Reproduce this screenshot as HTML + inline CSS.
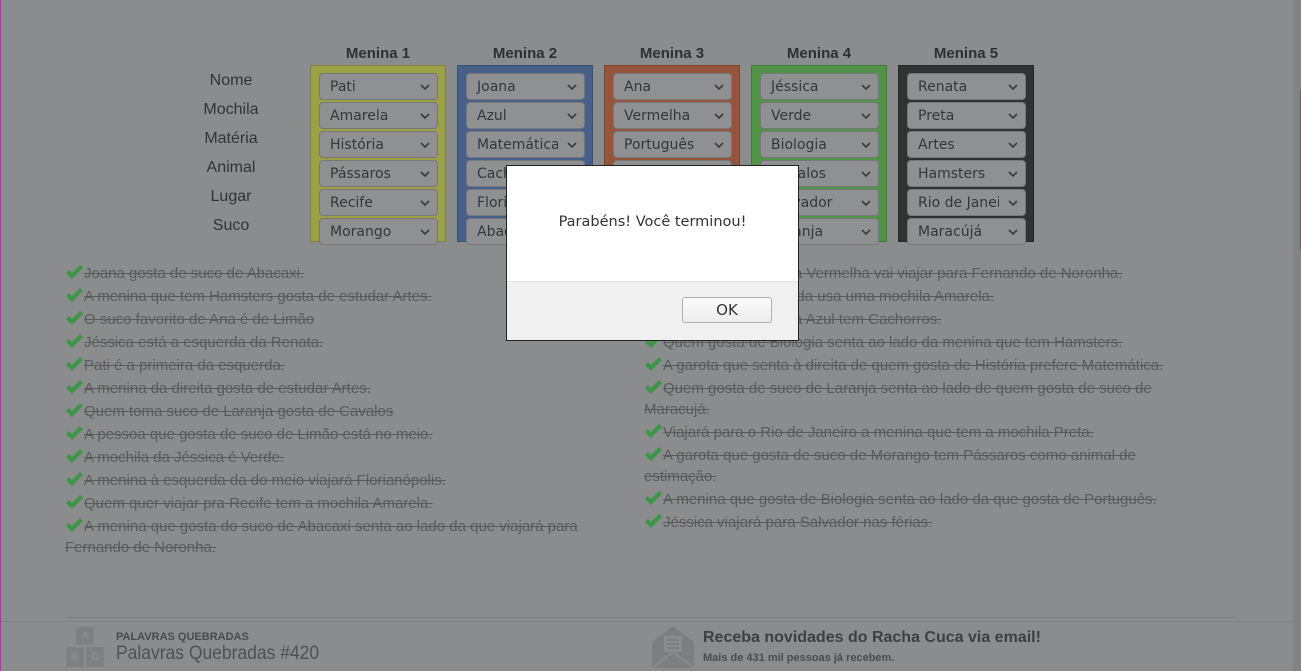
<!DOCTYPE html>
<html><head><meta charset="utf-8"><style>
*{margin:0;padding:0;box-sizing:border-box}
body{width:1301px;height:671px;overflow:hidden;background:#8b8c8e;font-family:"Liberation Sans",Arial,sans-serif;position:relative;border-left:1px solid #a0409a}
.rstrip{position:absolute;left:1292px;top:0;width:9px;height:671px;background:#828385}
.oline{position:absolute;left:1299px;top:90px;width:2px;height:160px;background:#8a5a40}
.lbl{position:absolute;width:100px;left:180px;text-align:center;font-size:16px;color:#333}
.col{position:absolute;top:65px;width:136px;height:177px}
.title{position:absolute;top:45px;width:136px;text-align:center;font-weight:bold;font-size:15px;color:#2f2f2f}
.sel{position:absolute;left:8px;width:119px;height:27px;background:#8f9091;border:1px solid #767778;border-radius:4px;font-family:"DejaVu Sans",sans-serif;font-size:14px;color:#363636;padding:5px 0 0 10px;white-space:nowrap;overflow:hidden}
.sel svg{position:absolute;right:7px;top:10px}
.clues{position:absolute;top:263px;width:552px;font-size:15px;color:#595a5b;list-style:none}
.clues li{line-height:21px;margin-bottom:2px;text-decoration:line-through}
.ck{display:inline-block;width:18px;height:14px;vertical-align:-1px;margin-right:1px}
.dlg{position:absolute;left:505px;top:165px;width:293px;height:176px;background:#fff;border:1px solid #222}
.dlg .msg{position:absolute;top:48px;width:100%;text-align:center;font-family:"DejaVu Sans",sans-serif;font-size:14.5px;color:#333}
.dlg .ft{position:absolute;left:0;top:115px;width:100%;height:59px;background:#f0f0f0;border-top:1px solid #e2e2e2}
.ok{position:absolute;left:175px;top:15px;width:90px;height:26px;border:1px solid #b0b0b0;border-radius:3px;background:linear-gradient(#fbfbfb,#ececec);font-family:"DejaVu Sans",sans-serif;font-size:15px;text-align:center;line-height:24px;color:#333}
</style></head><body>
<div class="rstrip"></div><div class="oline"></div>
<div class="lbl" style="top:72px">Nome</div>
<div class="lbl" style="top:101px">Mochila</div>
<div class="lbl" style="top:130px">Matéria</div>
<div class="lbl" style="top:159px">Animal</div>
<div class="lbl" style="top:188px">Lugar</div>
<div class="lbl" style="top:217px">Suco</div>

<div class="title" style="left:309px">Menina 1</div>
<div class="title" style="left:456px">Menina 2</div>
<div class="title" style="left:603px">Menina 3</div>
<div class="title" style="left:750px">Menina 4</div>
<div class="title" style="left:897px">Menina 5</div>

<div class="col" style="left:309px;background:#9ca145;border:1px solid #7d8040"></div>
<div class="col" style="left:456px;background:#47608a;border:1px solid #3a4e6e"></div>
<div class="col" style="left:603px;background:#94553a;border:1px solid #7a4530"></div>
<div class="col" style="left:750px;background:#529447;border:1px solid #427838"></div>
<div class="col" style="left:897px;background:#313234;border:1px solid #262626"></div>

<div id="sels"></div>

<ul class="clues" style="left:64px" id="l1">
<li>Joana gosta de suco de Abacaxi.</li>
<li>A menina que tem Hamsters gosta de estudar Artes.</li>
<li>O suco favorito de Ana é de Limão</li>
<li>Jéssica está a esquerda da Renata.</li>
<li>Pati é a primeira da esquerda.</li>
<li>A menina da direita gosta de estudar Artes.</li>
<li>Quem toma suco de Laranja gosta de Cavalos</li>
<li>A pessoa que gosta de suco de Limão está no meio.</li>
<li>A mochila da Jéssica é Verde.</li>
<li>A menina à esquerda da do meio viajará Florianópolis.</li>
<li>Quem quer viajar pra Recife tem a mochila Amarela.</li>
<li>A menina que gosta do suco de Abacaxi senta ao lado da que viajará para Fernando de Noronha.</li>
</ul>
<ul class="clues" style="left:643px" id="l2">
<li>A menina da mochila Vermelha vai viajar para Fernando de Noronha.</li>
<li>A menina da esquerda usa uma mochila Amarela.</li>
<li>A menina da mochila Azul tem Cachorros.</li>
<li>Quem gosta de Biologia senta ao lado da menina que tem Hamsters.</li>
<li>A garota que senta à direita de quem gosta de História prefere Matemática.</li>
<li>Quem gosta de suco de Laranja senta ao lado de quem gosta de suco de Maracujá.</li>
<li>Viajará para o Rio de Janeiro a menina que tem a mochila Preta.</li>
<li>A garota que gosta de suco de Morango tem Pássaros como animal de estimação.</li>
<li>A menina que gosta de Biologia senta ao lado da que gosta de Português.</li>
<li>Jéssica viajará para Salvador nas férias.</li>
</ul>

<div style="position:absolute;left:65px;top:617px;width:1170px;height:1px;background:#7c7d7f"></div>
<div style="position:absolute;left:0;top:621px;width:1292px;height:1px;background:#7e7f81"></div>
<div style="position:absolute;left:65px;top:627px;width:38px;height:40px">
<div style="position:absolute;left:10px;top:0;width:18px;height:18px;background:#7f8082;color:#8c8d8f;font-size:11px;font-weight:bold;text-align:center;line-height:18px">A</div>
<div style="position:absolute;left:0;top:20px;width:18px;height:20px;background:#7f8082;color:#8c8d8f;font-size:11px;font-weight:bold;text-align:center;line-height:20px">B</div>
<div style="position:absolute;left:20px;top:20px;width:18px;height:20px;background:#7f8082;color:#8c8d8f;font-size:11px;font-weight:bold;text-align:center;line-height:20px">C</div>
</div>
<div style="position:absolute;left:115px;top:631px;font-size:11px;font-weight:bold;color:#4a4a4a">PALAVRAS QUEBRADAS</div>
<div style="position:absolute;left:115px;top:643px;font-size:19px;color:#4f5052;transform:scaleX(0.92);transform-origin:left">Palavras Quebradas #420</div>
<svg style="position:absolute;left:651px;top:626px" width="42" height="42" viewBox="0 0 42 42"><path d="M0 16 L21 0 L42 16 L42 42 L0 42Z" fill="#7d7e80"/><rect x="12" y="10" width="18" height="16" fill="#8a8b8d"/><path d="M15 14h12M15 18h12M15 22h12" stroke="#7d7e80" stroke-width="2"/><path d="M0 42 L21 26 L42 42" fill="none" stroke="#8a8b8d" stroke-width="2"/></svg>
<div style="position:absolute;left:702px;top:629px;font-size:16px;font-weight:bold;color:#3e3f40">Receba novidades do Racha Cuca via email!</div>
<div style="position:absolute;left:702px;top:652px;font-size:11px;font-weight:bold;color:#4a4b4c">Mais de 431 mil pessoas já recebem.</div>

<div class="dlg"><div class="msg">Parabéns! Você terminou!</div><div class="ft"><div class="ok">OK</div></div></div>

<script>
var d=[["Pati","Amarela","História","Pássaros","Recife","Morango"],["Joana","Azul","Matemática","Cachorros","Florianópolis","Abacaxi"],["Ana","Vermelha","Português","Gatos","Fernando","Limão"],["Jéssica","Verde","Biologia","Cavalos","Salvador","Laranja"],["Renata","Preta","Artes","Hamsters","Rio de Janeiro","Maracújá"]];
var h="";d.forEach(function(c,i){c.forEach(function(v,j){h+='<div class="sel" style="left:'+(318+147*i)+'px;top:'+(73+29*j)+'px">'+v+'<span style="position:absolute;right:0;top:0;width:26px;height:25px;background:#8f9091"></span><svg width="10" height="7" viewBox="0 0 10 7"><path d="M1 1l4 4 4-4" fill="none" stroke="#3a3a3a" stroke-width="1.6"/></svg></div>'})});
document.getElementById("sels").innerHTML=h;
var ck='<svg class="ck" viewBox="0 0 18 14"><path d="M1 8 L4 5 L7 8 L15 0 L18 3 L7 14 Z" fill="#3c9646"/></svg>';
document.querySelectorAll(".clues li").forEach(function(li){li.innerHTML=ck+li.innerHTML});
</script>
</body></html>
